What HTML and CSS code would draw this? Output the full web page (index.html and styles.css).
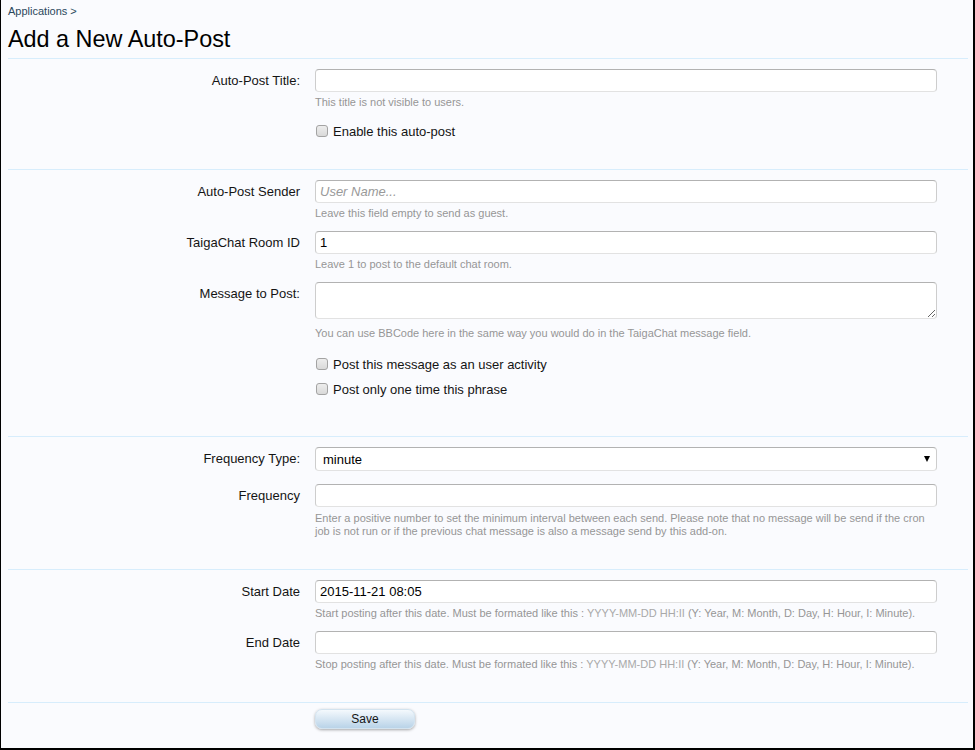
FILE: index.html
```html
<!DOCTYPE html>
<html lang="en">
<head>
<meta charset="utf-8">
<title>Add a New Auto-Post</title>
<link rel="stylesheet" href="styles.css">
</head>
<body>
<div class="page">
  <div class="crumbs">Applications &gt;</div>
  <h1 class="title">Add a New Auto-Post</h1>
  <form class="form">
    <div class="section s1">
      <div class="row">
        <label class="lbl">Auto-Post Title:</label>
        <div class="ctrl">
          <input class="textCtrl" type="text">
          <p class="hint">This title is not visible to users.</p>
        </div>
      </div>
      <div class="row gap13">
        <span></span>
        <label class="check"><input type="checkbox" class="cb"><span>Enable this auto-post</span></label>
      </div>
    </div>

    <div class="section s2">
      <div class="row">
        <label class="lbl">Auto-Post Sender</label>
        <div class="ctrl">
          <input class="textCtrl" type="text" placeholder="User Name...">
          <p class="hint">Leave this field empty to send as guest.</p>
        </div>
      </div>
      <div class="row gap11">
        <label class="lbl">TaigaChat Room ID</label>
        <div class="ctrl">
          <input class="textCtrl" type="text" value="1">
          <p class="hint">Leave 1 to post to the default chat room.</p>
        </div>
      </div>
      <div class="row gap11">
        <label class="lbl">Message to Post:</label>
        <div class="ctrl">
          <textarea class="textCtrl area"></textarea>
          <p class="hint hintArea">You can use BBCode here in the same way you would do in the TaigaChat message field.</p>
        </div>
      </div>
      <div class="row gap15">
        <span></span>
        <label class="check"><input type="checkbox" class="cb"><span>Post this message as an user activity</span></label>
      </div>
      <div class="row gap7">
        <span></span>
        <label class="check"><input type="checkbox" class="cb"><span>Post only one time this phrase</span></label>
      </div>
    </div>

    <div class="section s3">
      <div class="row">
        <label class="lbl">Frequency Type:</label>
        <div class="ctrl">
          <div class="selectWrap">
            <select class="textCtrl select">
              <option>minute</option>
            </select>
            <span class="arrow"></span>
          </div>
        </div>
      </div>
      <div class="row gap13">
        <label class="lbl">Frequency</label>
        <div class="ctrl">
          <input class="textCtrl" type="text">
          <p class="hint hintMulti">Enter a positive number to set the minimum interval between each send. Please note that no message will be send if the cron job is not run or if the previous chat message is also a message send by this add-on.</p>
        </div>
      </div>
    </div>

    <div class="section s4">
      <div class="row">
        <label class="lbl">Start Date</label>
        <div class="ctrl">
          <input class="textCtrl" type="text" value="2015-11-21 08:05">
          <p class="hint">Start posting after this date. Must be formated like this : <span class="fmt">YYYY-MM-DD HH:II</span> (Y: Year, M: Month, D: Day, H: Hour, I: Minute).</p>
        </div>
      </div>
      <div class="row gap11">
        <label class="lbl">End Date</label>
        <div class="ctrl">
          <input class="textCtrl" type="text">
          <p class="hint">Stop posting after this date. Must be formated like this : <span class="fmt">YYYY-MM-DD HH:II</span> (Y: Year, M: Month, D: Day, H: Hour, I: Minute).</p>
        </div>
      </div>
    </div>

    <div class="section s5">
      <div class="row">
        <span></span>
        <div class="ctrl">
          <button type="button" class="button">Save</button>
        </div>
      </div>
    </div>
  </form>
</div>
</body>
</html>
```

FILE: styles.css
```css
html, body {
  margin: 0;
  padding: 0;
  background: #fafbfe;
}

.page {
  box-sizing: border-box;
  height: 750px;
  border-left: 1px solid #000;
  border-right: 2px solid #000;
  border-bottom: 2px solid #000;
  background: #fafbfe;
  padding: 0 5px 0 7px;
  font-family: "Liberation Sans", Arial, sans-serif;
  color: #141414;
}

.crumbs {
  padding-top: 4px;
  font-size: 11px;
  line-height: 14px;
  color: #2b485c;
}

.title {
  margin: 6px 0 4px;
  font-size: 23.4px;
  line-height: 30px;
  font-weight: normal;
  color: #000;
}

.section {
  border-top: 1px solid #d7edfc;
  padding-top: 10px;
}
.s1 { padding-bottom: 29px; }
.s2 { padding-bottom: 38px; }
.s3 { padding-bottom: 31px; }
.s4 { padding-bottom: 31px; }
.s5 { padding-top: 6px; }

.row {
  display: grid;
  grid-template-columns: 292px 622px;
  column-gap: 15px;
}
.gap7 { margin-top: 7px; }
.gap11 { margin-top: 11px; }
.gap13 { margin-top: 13px; }
.gap15 { margin-top: 15px; }

.lbl {
  text-align: right;
  font-size: 13px;
  line-height: 23px;
  color: #141414;
}

.ctrl {
  display: flex;
  flex-direction: column;
  align-items: flex-start;
}

.textCtrl {
  box-sizing: border-box;
  display: block;
  width: 622px;
  height: 23px;
  margin: 0;
  padding: 0 4px;
  border: 1px solid #cdcdcd;
  border-top-color: #b2b2b2;
  border-bottom-color: #e2e2e2;
  border-radius: 4px;
  background: #fff;
  font-family: "Liberation Sans", Arial, sans-serif;
  font-size: 13px;
  color: #000;
  outline: none;
}
.textCtrl::placeholder {
  color: #999;
  font-style: italic;
}

.area {
  height: 37px;
  resize: vertical;
}

.selectWrap {
  position: relative;
}
.select {
  height: 24px;
  padding-left: 7px;
  appearance: none;
  -webkit-appearance: none;
}
.arrow {
  position: absolute;
  right: 7px;
  top: 9px;
  width: 0;
  height: 0;
  border-top: 6px solid #000;
  border-left: 3.5px solid transparent;
  border-right: 3.5px solid transparent;
  pointer-events: none;
}

.hint {
  margin: 4px 0 0;
  font-size: 11px;
  line-height: 13px;
  color: #969696;
}
.hintArea { margin-top: 8px; }
.hintMulti { margin-top: 5px; }
.fmt { color: #a9a9a9; }

.check {
  display: flex;
  align-items: center;
  height: 18px;
  font-size: 13px;
  color: #141414;
}
.cb {
  appearance: none;
  -webkit-appearance: none;
  box-sizing: border-box;
  width: 12px;
  height: 12px;
  margin: 0 5px 0 1px;
  border: 1px solid #a3a3a3;
  border-radius: 3px;
  background: linear-gradient(#ededed, #d9d9d9);
}

.button {
  box-sizing: border-box;
  width: 100px;
  height: 20px;
  margin: 0;
  padding: 0;
  border: 1px solid #d3e3ef;
  border-radius: 7px;
  background: linear-gradient(#f4f9fd, #b9d3e8);
  box-shadow: 0 1px 3px rgba(0, 0, 0, 0.35);
  font-family: "Liberation Sans", Arial, sans-serif;
  font-size: 12px;
  color: #141414;
}
```
